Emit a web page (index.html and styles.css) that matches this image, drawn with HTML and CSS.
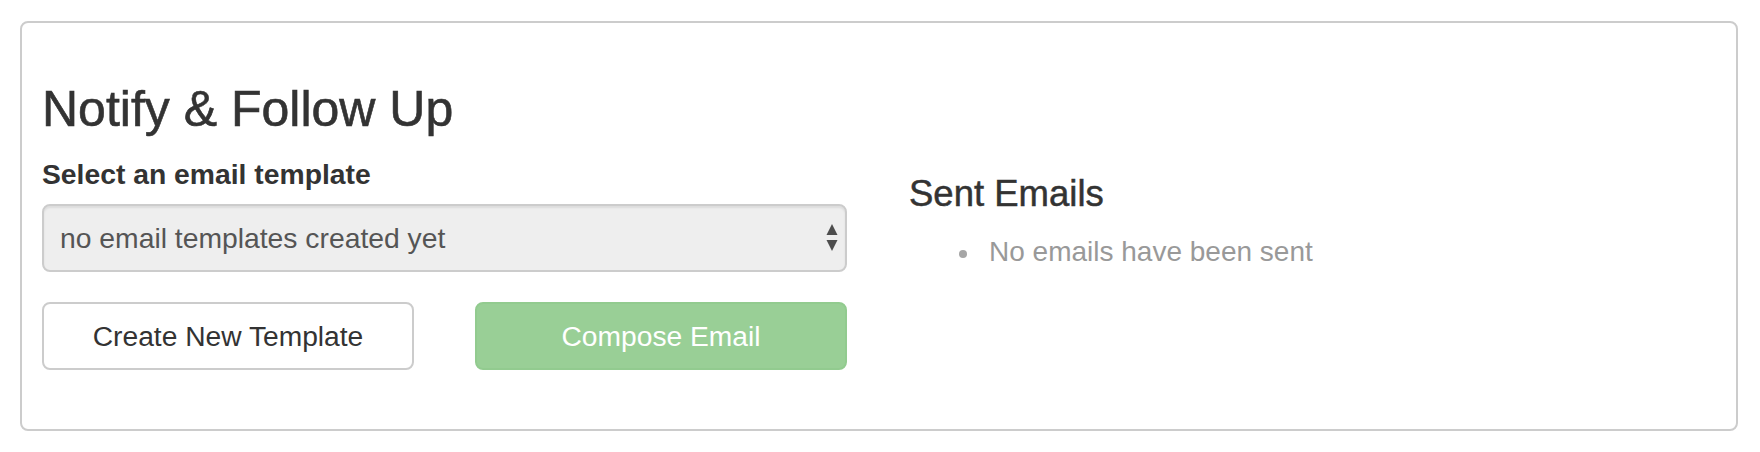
FILE: index.html
```html
<!DOCTYPE html>
<html lang="en">
<head>
<meta charset="utf-8">
<title>Notify &amp; Follow Up</title>
<link rel="stylesheet" href="styles.css">
</head>
<body>
<div class="page">
  <section class="panel">
    <h1 class="panel-title">Notify &amp; Follow Up</h1>
    <div class="panel-row">
      <div class="compose-col">
        <label class="field-label" for="template">Select an email template</label>
        <div class="select-wrap">
          <select id="template" class="select" disabled>
            <option>no email templates created yet</option>
          </select>
          <svg class="select-arrows" width="12" height="28" viewBox="0 0 12 28" aria-hidden="true">
            <polygon points="6,0 11.5,11 0.5,11" fill="#4d4d4d"/>
            <polygon points="0.5,16 11.5,16 6,27" fill="#4d4d4d"/>
          </svg>
        </div>
        <div class="btn-row">
          <button class="btn btn-default" type="button">Create New Template</button>
          <button class="btn btn-success" type="button" disabled>Compose Email</button>
        </div>
      </div>
      <div class="sent-col">
        <h2 class="sent-title">Sent Emails</h2>
        <ul class="sent-list">
          <li class="sent-item">No emails have been sent</li>
        </ul>
      </div>
    </div>
  </section>
</div>
</body>
</html>
```
FILE: styles.css
```css
html, body {
  margin: 0;
  padding: 0;
  background: #ffffff;
}

body {
  font-family: "Liberation Sans", Arial, Helvetica, sans-serif;
  color: #333333;
}

.page {
  padding: 21px 22px 0 20px;
}

.panel {
  border: 2px solid #cccccc;
  border-radius: 8px;
  background: #ffffff;
  padding: 59px 20px 59px 20px;
}

.panel-title {
  margin: 0 0 17px 0;
  font-size: 50px;
  line-height: 55px;
  font-weight: 400;
  color: #333333;
  -webkit-text-stroke: 0.6px #333333;
}

.panel-row {
  display: grid;
  grid-template-columns: 805px 1fr;
  column-gap: 62px;
  align-items: start;
}

.compose-col {
  display: flex;
  flex-direction: column;
}

.field-label {
  display: block;
  font-size: 28.3px;
  line-height: 40px;
  font-weight: 700;
  color: #333333;
  margin-bottom: 10px;
}

.select-wrap {
  position: relative;
  margin-bottom: 30px;
}

.select {
  -webkit-appearance: none;
  appearance: none;
  display: block;
  width: 100%;
  height: 68px;
  box-sizing: border-box;
  margin: 0;
  padding: 0 40px 0 16px;
  border: 2px solid #cccccc;
  border-radius: 8px;
  background: #eeeeee;
  font-family: "Liberation Sans", Arial, Helvetica, sans-serif;
  font-size: 28.3px;
  color: #555555;
  opacity: 1;
  box-shadow: inset 0 2px 2px rgba(0, 0, 0, 0.075);
}

.select-arrows {
  position: absolute;
  right: 9px;
  top: 20px;
}

.btn-row {
  display: grid;
  grid-template-columns: 1fr 1fr;
  column-gap: 61px;
}

.btn {
  height: 68px;
  box-sizing: border-box;
  margin: 0;
  padding: 0 12px;
  border: 2px solid #cccccc;
  border-radius: 8px;
  font-family: "Liberation Sans", Arial, Helvetica, sans-serif;
  font-size: 28.2px;
  line-height: 1;
  text-align: center;
}

.btn-default {
  background: #ffffff;
  color: #333333;
}

.btn-success {
  background: #99cf96;
  border-color: #92cb8f;
  color: #ffffff;
}

.sent-col {
  padding-top: 20px;
}

.sent-title {
  margin: 0 0 18px 0;
  font-size: 36.5px;
  line-height: 40px;
  font-weight: 400;
  color: #333333;
  -webkit-text-stroke: 0.5px #333333;
}

.sent-list {
  margin: 0;
  padding-left: 80px;
  list-style: none;
  color: #999999;
  font-size: 28px;
  line-height: 40px;
}

.sent-item::before {
  content: "";
  display: inline-block;
  width: 8px;
  height: 8px;
  border-radius: 50%;
  background: #a6a6a6;
  margin-left: -30px;
  margin-right: 22px;
  vertical-align: middle;
}
```
